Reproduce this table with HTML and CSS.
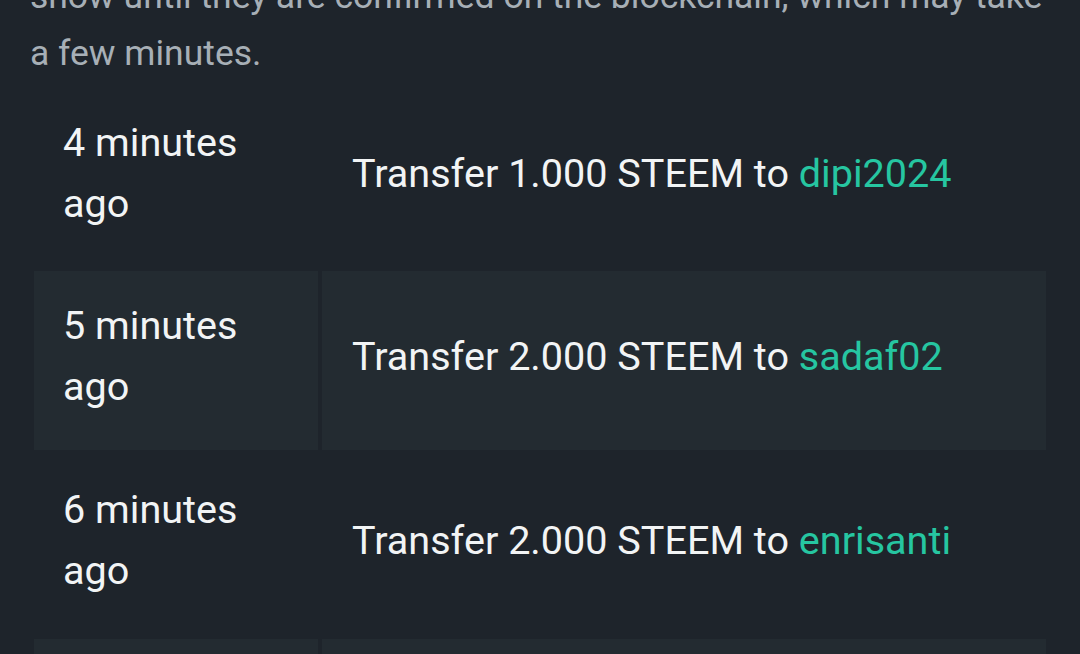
FILE: index.html
```html
<!DOCTYPE html>
<html lang="en">
<head>
<meta charset="utf-8">
<title>Transfers</title>
<link rel="stylesheet" href="styles.css">
</head>
<body>
<div class="page">
  <p class="note">Transfers may not<br>show until they are confirmed on the blockchain, which may take<br>a few minutes.</p>
  <table class="history">
    <tbody>
      <tr>
        <td class="time">4 minutes ago</td>
        <td class="op">Transfer 1.000 STEEM to <a class="user" href="#">dipi2024</a></td>
      </tr>
      <tr>
        <td class="time">5 minutes ago</td>
        <td class="op">Transfer 2.000 STEEM to <a class="user" href="#">sadaf02</a></td>
      </tr>
      <tr>
        <td class="time">6 minutes ago</td>
        <td class="op">Transfer 2.000 STEEM to <a class="user" href="#">enrisanti</a></td>
      </tr>
      <tr>
        <td class="time">7 minutes ago</td>
        <td class="op">Transfer 1.000 STEEM to <a class="user" href="#">steemit</a></td>
      </tr>
    </tbody>
  </table>
</div>
</body>
</html>
```

FILE: styles.css
```css
html, body {
  margin: 0;
  padding: 0;
  background: #1e242b;
  overflow: hidden;
}

body {
  font-family: Roboto, "Liberation Sans", sans-serif;
  color: #f2f4f5;
}

.page {
  padding: 0 30px;
}

.note {
  margin: -89px 0 2px 0;
  width: 1040px;
  font-size: 35.5px;
  line-height: 57px;
  color: #a7afb6;
  text-align: left;
  white-space: nowrap;
}

.history {
  border-collapse: separate;
  border-spacing: 4px;
  width: 1020px;
  margin: 0;
}

.history td {
  font-size: 39.6px;
  line-height: 61px;
  padding: 24px 29px 33px 29px;
  vertical-align: middle;
}

.history tr:nth-child(3) td {
  padding-top: 25px;
  padding-bottom: 34px;
}

.history .time {
  width: 226px;
}

.history .op {
  padding-left: 30px;
}

.history tr:nth-child(even) td {
  background: #232b31;
}

.user {
  color: #26c6a1;
  text-decoration: none;
}
```
